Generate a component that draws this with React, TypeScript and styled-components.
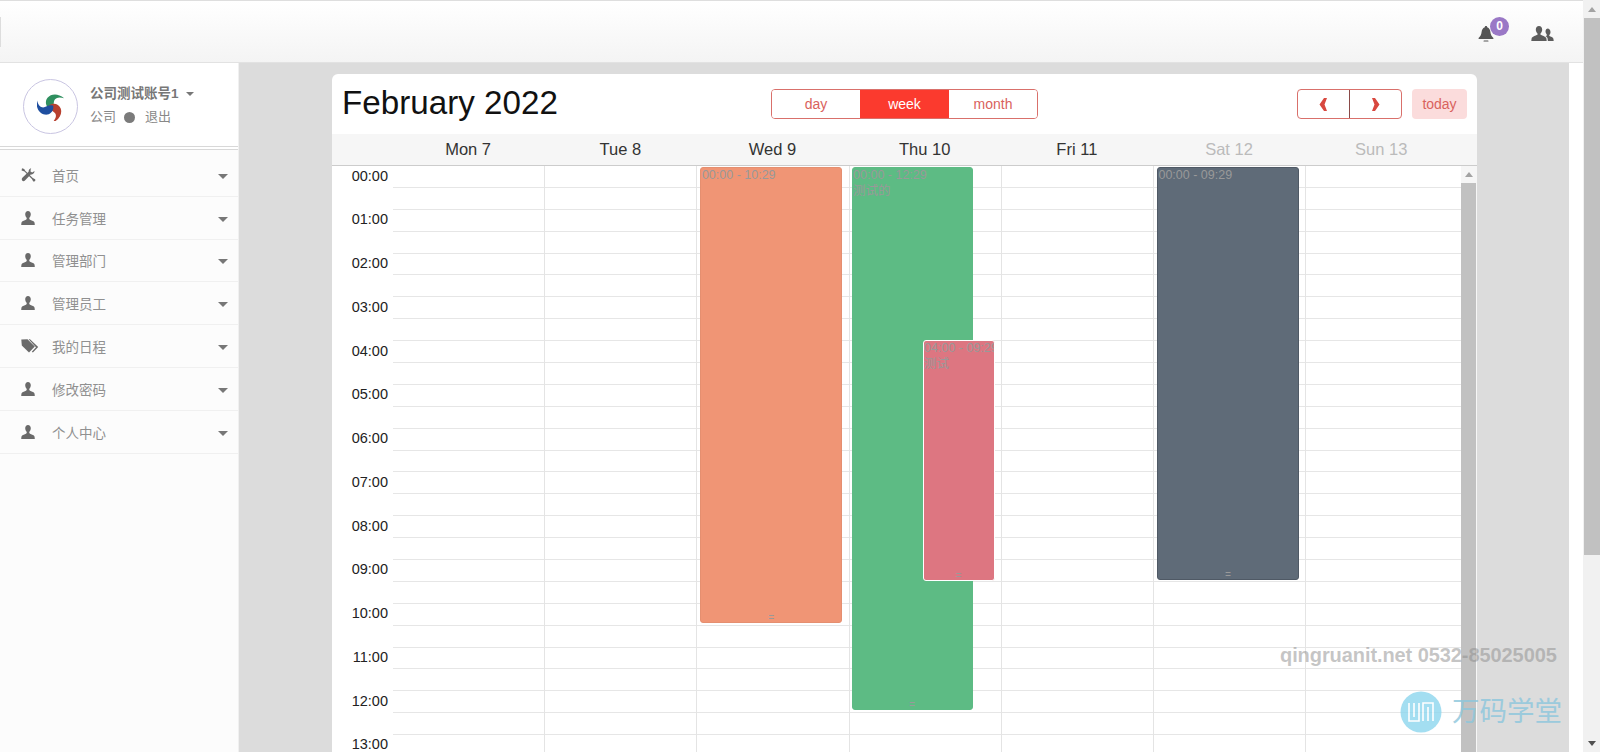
import React from "react";
import styled, { createGlobalStyle } from "styled-components";

const Global = createGlobalStyle`
  html, body { margin: 0; padding: 0; height: 752px; overflow: hidden; }
  body { font-family: "Liberation Sans", "Noto Sans CJK SC", sans-serif; background: #fff; color: #333; }
  * { box-sizing: border-box; }
`;

const Page = styled.div`
  position: relative;
  display: flex;
  width: 1600px;
  height: 752px;
  overflow: hidden;
`;
const Main = styled.div`
  width: 1583px;
  display: flex;
  flex-direction: column;
`;
const TopBar = styled.header`
  height: 63px;
  flex: none;
  display: flex;
  align-items: center;
  justify-content: space-between;
  padding-right: 29px;
  border-top: 1px solid #dedede;
  border-bottom: 1px solid #e2e2e2;
  background: linear-gradient(#fff, #f4f4f4);
`;
const TopNotch = styled.div`
  width: 1px;
  height: 30px;
  background: #ddd;
`;
const TopIcons = styled.div`
  display: flex;
  align-items: center;
  gap: 37px;
  margin-top: 4px;
`;
const BellWrap = styled.div`
  position: relative;
  width: 16px;
  height: 16px;
  display: flex;
`;
const Badge = styled.span`
  position: absolute;
  left: 12px;
  top: -9px;
  width: 19px;
  height: 19px;
  border-radius: 50%;
  background: #9a78c6;
  color: #fff;
  font-size: 12px;
  font-weight: bold;
  line-height: 18px;
  text-align: center;
`;
const Lower = styled.div`
  flex: 1;
  display: flex;
  min-height: 0;
`;
const Sidebar = styled.aside`
  width: 239px;
  flex: none;
  background: #fcfcfc;
  border-right: 1px solid #f0f0f0;
`;
const Profile = styled.div`
  height: 87px;
  display: flex;
  align-items: flex-start;
  gap: 12px;
  padding: 16px 0 0 23px;
  border-bottom: 4px double #d8d8d8;
  background: #fff;
`;
const Avatar = styled.div`
  width: 55px;
  height: 55px;
  border-radius: 50%;
  border: 1px solid #c9c5e2;
  background: #fff;
  display: flex;
  align-items: center;
  justify-content: center;
  flex: none;
`;
const ProfileText = styled.div`
  display: flex;
  flex-direction: column;
  gap: 3px;
  padding-top: 5px;
`;
const ProfileName = styled.div`
  display: flex;
  align-items: center;
  gap: 7px;
  font-size: 13.5px;
  line-height: 20px;
  font-weight: bold;
  color: #777;
`;
const ProfileSub = styled.div`
  display: flex;
  align-items: center;
  font-size: 13px;
  line-height: 20px;
  color: #888;
`;
const StatusDot = styled.span`
  width: 11px;
  height: 11px;
  border-radius: 50%;
  background: #7b7b7b;
  margin: 0 10px 0 8px;
`;
const Caret = styled.span<{ $size: number }>`
  width: 0;
  height: 0;
  border-left: ${(p) => p.$size}px solid transparent;
  border-right: ${(p) => p.$size}px solid transparent;
  border-top: ${(p) => p.$size}px solid #777;
`;
const MenuCaret = styled(Caret)`
  margin-top: 3px;
`;
const Menu = styled.nav`
  padding-top: 4px;
`;
const MenuItem = styled.div`
  height: 42.8px;
  display: flex;
  align-items: center;
  padding: 0 10px 0 21px;
  border-bottom: 1px solid #f0f0f0;
`;
const MenuIcon = styled.span`
  width: 31px;
  display: flex;
  flex: none;
`;
const MenuLabel = styled.span`
  flex: 1;
  font-size: 13.5px;
  color: #909090;
`;
const Content = styled.main`
  width: 1330px;
  flex: none;
  background: #dcdcdc;
  padding: 11px 0 0 93px;
  overflow: hidden;
`;
const Gutter = styled.div`
  flex: 1;
  background: #fff;
`;
const Card = styled.section`
  width: 1145px;
  background: #fff;
  border-radius: 6px 6px 0 0;
  overflow: hidden;
`;
const CalHeader = styled.div`
  height: 60px;
  display: grid;
  grid-template-columns: 1fr auto 1fr;
  align-items: center;
  padding: 0 10px 0 10px;
`;
const Title = styled.h1`
  margin: 0 0 3px;
  font-size: 33.2px;
  font-weight: normal;
  color: #111;
  line-height: 44px;
`;
const Group = styled.div`
  display: flex;
  height: 30px;
  border: 1px solid #d9706b;
  border-radius: 4px;
  overflow: hidden;
`;
const ViewButton = styled.div<{ $active?: boolean; $w: number }>`
  width: ${(p) => p.$w}px;
  display: flex;
  align-items: center;
  justify-content: center;
  font-size: 14px;
  color: ${(p) => (p.$active ? "#fff" : "#d9625d")};
  background: ${(p) => (p.$active ? "#fb3a2e" : "#fff")};
`;
const RightTools = styled.div`
  display: flex;
  justify-content: flex-end;
  gap: 10px;
`;
const NavButton = styled.div`
  width: 51px;
  display: flex;
  align-items: center;
  justify-content: center;
  & + & { border-left: 1px solid #8a4a48; width: 52px; }
`;
const Today = styled.div`
  width: 55px;
  height: 30px;
  border-radius: 4px;
  background: #fbdcdc;
  color: #d9625d;
  font-size: 14px;
  display: flex;
  align-items: center;
  justify-content: center;
`;
const DayHeader = styled.div`
  height: 32px;
  display: grid;
  grid-template-columns: 60px repeat(7, 152.2px);
  background: #f6f6f6;
  border-bottom: 1px solid #ccc;
`;
const DayName = styled.div<{ $weekend?: boolean }>`
  font-size: 16.5px;
  line-height: 31px;
  text-align: center;
  color: ${(p) => (p.$weekend ? "#bbb" : "#333")};
`;
const Body = styled.div`
  display: flex;
  height: 600px;
  overflow: hidden;
`;
const TimeColumn = styled.div`
  width: 61px;
  flex: none;
  margin-top: -0.5px;
`;
const TimeLabel = styled.div`
  height: 43.75px;
  padding: 0 5px 0 0;
  text-align: right;
  font-size: 14.5px;
  line-height: 20px;
  color: #222;
`;
const DayArea = styled.div`
  position: relative;
  flex: 1;
`;
const Slot = styled.div`
  height: 21.9px;
  border-bottom: 1px solid #e6e6e6;
`;
const Columns = styled.div`
  position: absolute;
  inset: 0;
  display: grid;
  grid-template-columns: repeat(6, 152.2px) 1fr;
`;
const DayColumn = styled.div`
  position: relative;
  border-right: 1px solid #e4e4e4;
  &:last-child { border-right: 0; }
`;
const Event = styled.div<{ $bg: string; $top: number; $left: number; $w: number; $h: number; $edge: string; $z?: number }>`
  position: absolute;
  top: ${(p) => p.$top}px;
  left: ${(p) => p.$left}px;
  width: ${(p) => p.$w}px;
  height: ${(p) => p.$h}px;
  z-index: ${(p) => p.$z ?? 1};
  background: ${(p) => p.$bg};
  border: 1px solid ${(p) => p.$edge};
  border-radius: 3px;
  padding: 0 0.5px;
  font-size: 12.5px;
  color: #999;
  overflow: hidden;
  white-space: nowrap;
  &::after {
    content: "=";
    position: absolute;
    left: 0;
    right: 0;
    bottom: -3px;
    text-align: center;
    font-family: "Liberation Mono", monospace;
    font-size: 10px;
    line-height: 12px;
  }
`;
const EventLine = styled.div`
  height: 15.5px;
  line-height: 15.5px;
`;
const InnerScroll = styled.div`
  width: 16px;
  flex: none;
  display: flex;
  flex-direction: column;
  background: #f6f6f6;
`;
const ScrollArrow = styled.div<{ $down?: boolean; $h: number }>`
  height: ${(p) => p.$h}px;
  flex: none;
  display: flex;
  align-items: center;
  justify-content: center;
  &::before {
    content: "";
    width: 0;
    height: 0;
    border-left: 4px solid transparent;
    border-right: 4px solid transparent;
    ${(p) => (p.$down ? "border-top: 5px solid #505050;" : "border-bottom: 5px solid #a3a3a3;")}
  }
`;
const InnerThumb = styled.div`
  flex: 1;
  background: #c1c1c1;
  margin: 0 1px 0 0;
`;
const PageScroll = styled.div`
  width: 17px;
  flex: none;
  display: flex;
  flex-direction: column;
  background: #f1f1f1;
`;
const PageThumb = styled.div`
  height: 537px;
  flex: none;
  margin-left: 1px;
  background: #c1c1c1;
`;
const PageTrack = styled.div`
  flex: 1;
`;
const Watermark = styled.div`
  position: absolute;
  left: 1280px;
  top: 642px;
  font-size: 20px;
  letter-spacing: -0.08px;
  line-height: 26px;
  font-weight: bold;
  color: rgba(140, 140, 140, 0.5);
  white-space: nowrap;
  z-index: 5;
`;
const BrandMark = styled.div`
  position: absolute;
  left: 1400px;
  top: 691px;
  display: flex;
  align-items: center;
  gap: 10px;
  z-index: 5;
  opacity: 0.8;
`;
const BrandText = styled.span`
  font-size: 27.5px;
  line-height: 40px;
  color: #8cc6dc;
  white-space: nowrap;
`;

const UserIcon = () => (
  <svg width="14" height="14" viewBox="0 0 14 14" fill="#6a6a6a">
    <path d="M7 0C5.3 0 4.2 1.300 4.200 3.200c0 1.500.7 2.900 1.500 3.600v1.100C5 9 3 9.500 1.500 10.200.8 10.600.5 11.200.4 12L.2 14h13.600l-.2-2c-.1-.8-.4-1.400-1.100-1.800C11 9.500 9 9 8.300 7.900V6.800c.8-.7 1.500-2.100 1.500-3.600C9.800 1.300 8.700 0 7 0z" />
  </svg>
);
const ToolsIcon = () => (
  <svg width="15" height="14" viewBox="0 0 15 14" fill="#6a6a6a">
    <path d="M1 .3 3.200 1l1 1.700 7.600 7.400 2.300 1.200.4 1-1.400 1.400-1-.4-1.200-2.400-7.400-7.400L.6 2.400z" />
    <path d="M10.200.3c-.9.1-2.300 1-2.500 2.400l-.1 1-6 5.800C.7 10.300.6 11.400 1 12.300c.5.900 1.900 1.200 2.700.4l6-6.100 1.100-.1c1.500-.3 2.800-1.700 2.700-3.500l-2.300 1.600-1.700-1.200.2-2.200z" />
  </svg>
);
const TagsIcon = () => (
  <svg width="18" height="14" viewBox="0 0 18 14" fill="#6a6a6a">
    <path d="M.3.6 6.500.3l7.300 7.100-5.800 6.100L.8 6.400z" />
    <path d="m9 .3 8.200 7.800-5.300 5.500-1.100-.9 4.200-4.500L7.600.3z" />
  </svg>
);
const BellIcon = () => (
  <svg width="16" height="16" viewBox="0 0 16 16" fill="#555">
    <path d="M8 0c-.8 0-1.200.5-1.200 1.200C4.600 2 3.800 3.900 3.600 6.100 3.400 8.800 2.200 10.500.6 12.100v.9h14.800v-.9c-1.600-1.600-2.800-3.300-3-6-.2-2.200-1-4.100-3.200-4.900C9.200.5 8.800 0 8 0z" />
    <rect x="5.500" y="14.400" width="5" height="1.200" rx=".6" />
  </svg>
);
const UsersIcon = () => (
  <svg width="23" height="15" viewBox="0 0 23 15" fill="#5c5c5c">
    <path d="M8 0C6 0 4.800 1.500 4.800 3.600c0 1.600.8 3.200 1.700 4v1.200C4.600 9.700 1 10.600.6 12.400L.3 15h15.400l-.3-2.600c-.4-1.800-4-2.700-5.900-3.600V7.600c.9-.8 1.700-2.400 1.700-4C11.200 1.500 10 0 8 0z" />
    <path d="M17 2.500c-1.500 0-2.500 1.200-2.500 2.800 0 1.300.6 2.500 1.300 3.100v1c-.5.300-1 .5-1.500.7 1.300.7 2.100 1.500 2.300 2.500l.3 2.400h5.800l-.3-2.300c-.2-1.300-2.800-2-4.100-2.700v-1c.7-.6 1.200-1.800 1.200-3.100 0-1.600-1-2.800-2.500-3.400z" />
  </svg>
);
const ChevronIcon = ({ right }: { right?: boolean }) => (
  <svg width="9" height="13" viewBox="0 0 9 13" fill="#d8483f">
    <path d={right ? "M1 0h3l4.500 6.500L4 13H1l2.500-6.500z" : "M8 0H5L.5 6.500 5 13h3L5.500 6.500z"} />
  </svg>
);
const LogoIcon = () => {
  const blade = "M16 19C10 16.500 8.500 10 12 5.500 16 .8 24 0 31 6c-5.500-1.700-9.500-.7-11 2-1.500 2.800 0 7.500-4 11z";
  return (
    <svg width="28" height="28" viewBox="0 0 32 32">
      <path d={blade} fill="#2f8f5f" />
      <path d={blade} fill="#b8402f" transform="rotate(120 16 16)" />
      <path d={blade} fill="#1f4fa0" transform="rotate(240 16 16)" />
    </svg>
  );
};
const BrandLogo = () => (
  <svg width="42" height="42" viewBox="0 0 42 42">
    <circle cx="21" cy="21" r="20.500" fill="#8dd6ee" />
    <path d="M9 12v18h10V12M14 12v14M23 30V12h10v18M28 30V16" fill="none" stroke="#fff" strokeWidth="1.600" />
  </svg>
);

const menu = [
  { label: "首页", icon: <ToolsIcon /> },
  { label: "任务管理", icon: <UserIcon /> },
  { label: "管理部门", icon: <UserIcon /> },
  { label: "管理员工", icon: <UserIcon /> },
  { label: "我的日程", icon: <TagsIcon /> },
  { label: "修改密码", icon: <UserIcon /> },
  { label: "个人中心", icon: <UserIcon /> },
];
const days = [
  { n: "Mon 7" },
  { n: "Tue 8" },
  { n: "Wed 9" },
  { n: "Thu 10" },
  { n: "Fri 11" },
  { n: "Sat 12", w: true },
  { n: "Sun 13", w: true },
];
const hours = Array.from({ length: 14 }, (_, i) => `${String(i).padStart(2, "0")}:00`);
const slots = Array.from({ length: 28 }, (_, i) => i);

export default function App() {
  return (
    <Page>
      <Global />
      <Main>
        <TopBar>
          <TopNotch />
          <TopIcons>
            <BellWrap>
              <BellIcon />
              <Badge>0</Badge>
            </BellWrap>
            <UsersIcon />
          </TopIcons>
        </TopBar>
        <Lower>
          <Sidebar>
            <Profile>
              <Avatar>
                <LogoIcon />
              </Avatar>
              <ProfileText>
                <ProfileName>
                  公司测试账号1
                  <Caret $size={4} />
                </ProfileName>
                <ProfileSub>
                  公司
                  <StatusDot />
                  退出
                </ProfileSub>
              </ProfileText>
            </Profile>
            <Menu>
              {menu.map((m) => (
                <MenuItem key={m.label}>
                  <MenuIcon>{m.icon}</MenuIcon>
                  <MenuLabel>{m.label}</MenuLabel>
                  <MenuCaret $size={5} />
                </MenuItem>
              ))}
            </Menu>
          </Sidebar>
          <Content>
            <Card>
              <CalHeader>
                <Title>February 2022</Title>
                <Group>
                  <ViewButton $w={88}>day</ViewButton>
                  <ViewButton $w={89} $active>
                    week
                  </ViewButton>
                  <ViewButton $w={88}>month</ViewButton>
                </Group>
                <RightTools>
                  <Group>
                    <NavButton>
                      <ChevronIcon />
                    </NavButton>
                    <NavButton>
                      <ChevronIcon right />
                    </NavButton>
                  </Group>
                  <Today>today</Today>
                </RightTools>
              </CalHeader>
              <DayHeader>
                <span />
                {days.map((d) => (
                  <DayName key={d.n} $weekend={d.w}>
                    {d.n}
                  </DayName>
                ))}
              </DayHeader>
              <Body>
                <TimeColumn>
                  {hours.map((h) => (
                    <TimeLabel key={h}>{h}</TimeLabel>
                  ))}
                </TimeColumn>
                <DayArea>
                  {slots.map((s) => (
                    <Slot key={s} />
                  ))}
                  <Columns>
                    <DayColumn />
                    <DayColumn />
                    <DayColumn>
                      <Event $bg="#f09575" $edge="#e58f70" $top={1} $left={3} $w={142} $h={456}>
                        <EventLine>00:00 - 10:29</EventLine>
                      </Event>
                    </DayColumn>
                    <DayColumn>
                      <Event $bg="#5dbb84" $edge="#5dbb84" $top={1} $left={2} $w={121} $h={543}>
                        <EventLine>00:00 - 12:29</EventLine>
                        <EventLine>测试的</EventLine>
                      </Event>
                      <Event $bg="#dd7681" $edge="#fff" $top={174} $left={73} $w={72} $h={241} $z={2}>
                        <EventLine>04:00 - 09:29</EventLine>
                        <EventLine>测试</EventLine>
                      </Event>
                    </DayColumn>
                    <DayColumn />
                    <DayColumn>
                      <Event $bg="#5f6b78" $edge="#4f5965" $top={1} $left={3} $w={142} $h={413}>
                        <EventLine>00:00 - 09:29</EventLine>
                      </Event>
                    </DayColumn>
                    <DayColumn />
                  </Columns>
                </DayArea>
                <InnerScroll>
                  <ScrollArrow $h={17} />
                  <InnerThumb />
                </InnerScroll>
              </Body>
            </Card>
          </Content>
          <Gutter />
        </Lower>
      </Main>
      <PageScroll>
        <ScrollArrow $h={18} />
        <PageThumb />
        <PageTrack />
        <ScrollArrow $h={17} $down />
      </PageScroll>
      <Watermark>qingruanit.net 0532-85025005</Watermark>
      <BrandMark>
        <BrandLogo />
        <BrandText>万码学堂</BrandText>
      </BrandMark>
    </Page>
  );
}
